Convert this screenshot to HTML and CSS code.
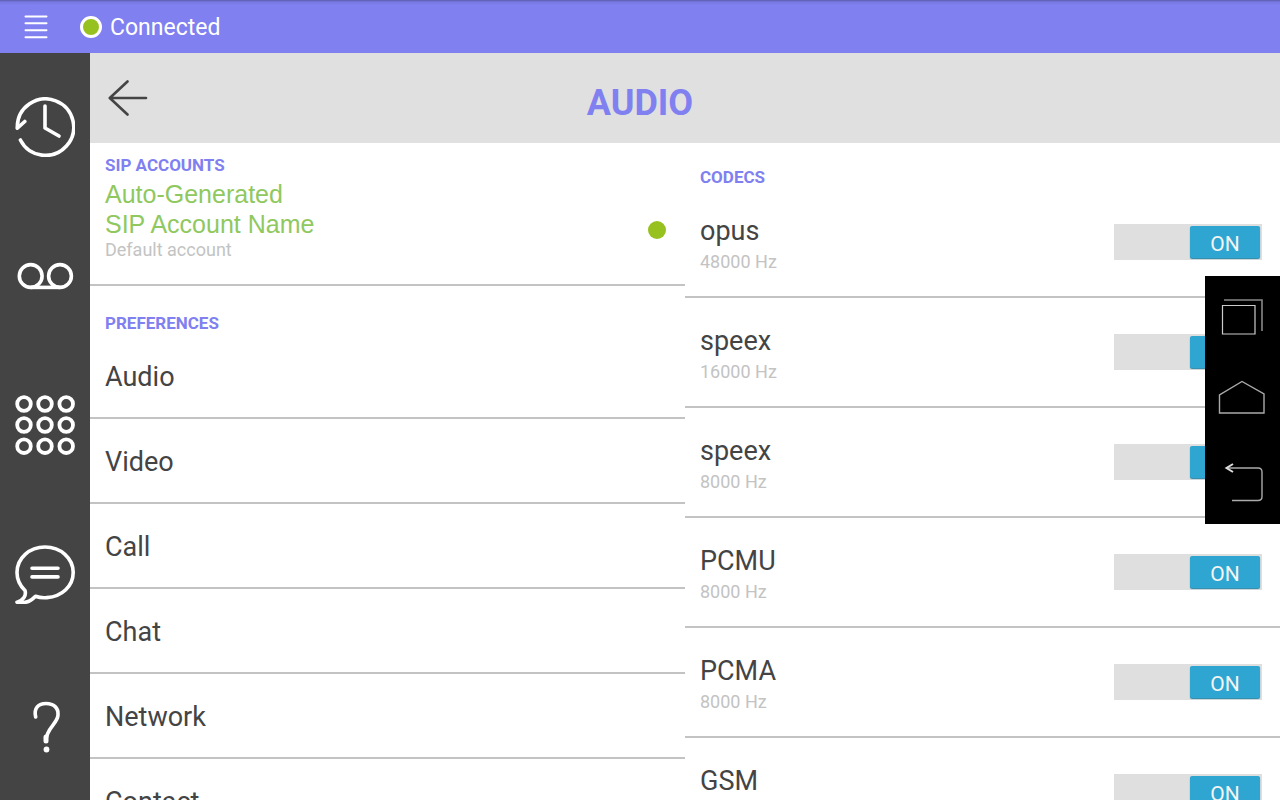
FILE: index.html
```html
<!DOCTYPE html>
<html lang="en">
<head>
<meta charset="utf-8">
<meta name="viewport" content="width=device-width, initial-scale=1">
<title>Audio settings</title>
<link rel="stylesheet" href="styles.css">
</head>
<body>
<div class="app">
  <header class="topbar">
    <button class="icon-button menu-button" type="button" aria-label="Menu">
      <svg width="24" height="24" viewBox="0 0 24 24" fill="none" stroke="#fff" stroke-width="2" stroke-linecap="round"><path d="M1.500 1.500h21M1.500 8.300h21M1.500 15.200h21M1.500 22.200h21"/></svg>
    </button>
    <span class="status-dot"></span>
    <span class="status-text">Connected</span>
  </header>
  <div class="body">
    <nav class="sidebar" aria-label="Main">
      <button class="icon-button side-item" type="button" aria-label="History">
        <svg width="60" height="60" viewBox="0 0 60 60" fill="none" stroke="#fff" stroke-width="3.600" stroke-linecap="round" stroke-linejoin="round"><path d="M2.300 30A28.200 28.200 0 1 1 5.400 43"/><path d="M9.800 24.500L2.300 31.200"/><path d="M30 9v22l14 8"/></svg>
      </button>
      <button class="icon-button side-item" type="button" aria-label="Voicemail">
        <svg width="60" height="30" viewBox="0 0 60 30" fill="none" stroke="#fff" stroke-width="3.600"><circle cx="15.700" cy="15" r="11.400"/><circle cx="45" cy="15" r="11.400"/><path d="M15.700 26.400H45"/></svg>
      </button>
      <button class="icon-button side-item" type="button" aria-label="Dial pad">
        <svg width="60" height="60" viewBox="0 0 60 60" fill="none" stroke="#fff" stroke-width="3.800"><circle cx="9" cy="9" r="6.800"/><circle cx="30" cy="9" r="6.800"/><circle cx="51.200" cy="9" r="6.800"/><circle cx="9" cy="30" r="6.800"/><circle cx="30" cy="30" r="6.800"/><circle cx="51.200" cy="30" r="6.800"/><circle cx="9" cy="51.200" r="6.800"/><circle cx="30" cy="51.200" r="6.800"/><circle cx="51.200" cy="51.200" r="6.800"/></svg>
      </button>
      <button class="icon-button side-item" type="button" aria-label="Chat">
        <svg width="60" height="60" viewBox="0 -1 60 60" fill="none" stroke="#fff" stroke-width="3.600" stroke-linecap="round" stroke-linejoin="round"><path d="M20.500 51.200C25 52.900 29 53 32 52.600C47 51.500 58.200 41 58.200 27.500C58.200 13 45.500 2 30 2S2 13 2 27.500C2 34.500 4.800 40.500 10 45.500C11.500 50.500 8.500 55.500 2 57.200C10 59 16 56 20.500 51.200Z"/><path d="M17 23.200h26M17 31.900h26"/></svg>
      </button>
      <button class="icon-button side-item" type="button" aria-label="Help">
        <svg width="60" height="60" viewBox="0 -8 60 60" fill="none" stroke="#fff" stroke-width="3.600" stroke-linecap="round"><path d="M20.700 16C18.500 7 23.500 2.500 31 2.500C39 2.500 43.500 7 43 14C42.500 23 31 27 31 40"/><path d="M31 36v4" stroke-width="5"/><circle cx="31.500" cy="48.500" r="2.900" fill="#fff" stroke="none"/></svg>
      </button>
    </nav>
    <main class="content">
      <div class="title-bar">
        <button class="icon-button back-button" type="button" aria-label="Back">
          <svg width="40" height="36" viewBox="0 0 40 36" fill="none" stroke="#444" stroke-width="2.600" stroke-linecap="round" stroke-linejoin="round"><path d="M38 18H2M19.500 1.500L1.800 18L19.500 34.500"/></svg>
        </button>
        <h1 class="title">AUDIO</h1>
      </div>
      <div class="panes">
        <section class="pane">
          <div class="account-section">
            <h2 class="heading">SIP ACCOUNTS</h2>
            <button class="account" type="button">
              <span class="account-text">
                <span class="account-name">Auto-Generated<br>SIP Account Name</span>
                <span class="caption">Default account</span>
              </span>
              <span class="account-dot"></span>
            </button>
          </div>
          <h2 class="heading preferences-heading">PREFERENCES</h2>
          <button class="preference" type="button">Audio</button>
          <button class="preference" type="button">Video</button>
          <button class="preference" type="button">Call</button>
          <button class="preference" type="button">Chat</button>
          <button class="preference" type="button">Network</button>
          <button class="preference" type="button">Contact</button>
        </section>
        <section class="pane">
          <h2 class="heading codecs-heading">CODECS</h2>
          <label class="codec"><span class="codec-text"><span class="codec-name">opus</span><span class="caption">48000 Hz</span></span><span class="switch"><input class="switch-input" type="checkbox" checked><span class="thumb">ON</span></span></label>
          <label class="codec"><span class="codec-text"><span class="codec-name">speex</span><span class="caption">16000 Hz</span></span><span class="switch"><input class="switch-input" type="checkbox" checked><span class="thumb">ON</span></span></label>
          <label class="codec"><span class="codec-text"><span class="codec-name">speex</span><span class="caption">8000 Hz</span></span><span class="switch"><input class="switch-input" type="checkbox" checked><span class="thumb">ON</span></span></label>
          <label class="codec"><span class="codec-text"><span class="codec-name">PCMU</span><span class="caption">8000 Hz</span></span><span class="switch"><input class="switch-input" type="checkbox" checked><span class="thumb">ON</span></span></label>
          <label class="codec"><span class="codec-text"><span class="codec-name">PCMA</span><span class="caption">8000 Hz</span></span><span class="switch"><input class="switch-input" type="checkbox" checked><span class="thumb">ON</span></span></label>
          <label class="codec"><span class="codec-text"><span class="codec-name">GSM</span><span class="caption">8000 Hz</span></span><span class="switch"><input class="switch-input" type="checkbox" checked><span class="thumb">ON</span></span></label>
        </section>
      </div>
    </main>
  </div>
  <nav class="system-nav" aria-label="System">
    <button class="icon-button system-item" type="button" aria-label="Recent apps">
      <svg width="48" height="40" viewBox="0 0 48 40" fill="none"><path d="M5.500 8.500h32.500v28.500h-32.500z" stroke="#ccc" stroke-width="1.200"/><path d="M7 3h38v31" stroke="#888" stroke-width="1.600"/></svg>
    </button>
    <button class="icon-button system-item" type="button" aria-label="Home">
      <svg width="48" height="40" viewBox="0 0 48 40" fill="none" stroke="#aaa" stroke-width="1.400"><path d="M2.500 33V15L25 1.500L47 14V33Z"/></svg>
    </button>
    <button class="icon-button system-item" type="button" aria-label="Back">
      <svg width="48" height="40" viewBox="0 0 48 40" fill="none" stroke="#aaa" stroke-width="1.400"><path d="M10 5H41Q45 5 45 9V33.500Q45 37.500 41 37.500H15"/><path d="M16 1L9.500 5L16 9" stroke="#ddd" stroke-width="2"/></svg>
    </button>
  </nav>
</div>
</body>
</html>
```
FILE: styles.css
```css
* {
  box-sizing: border-box;
}

body {
  margin: 0;
  font-family: Roboto, "Liberation Sans", sans-serif;
  color: #444;
  background: #fff;
}

button {
  font: inherit;
  color: inherit;
  background: none;
  border: 0;
  padding: 0;
  text-align: left;
  cursor: pointer;
}

h1,
h2 {
  margin: 0;
}

.app {
  display: flex;
  flex-direction: column;
  height: 100vh;
  overflow: hidden;
}

.icon-button {
  display: flex;
  align-items: center;
  justify-content: center;
}

.topbar {
  flex: none;
  display: flex;
  align-items: center;
  height: 53px;
  padding-left: 24px;
  color: #fff;
  background: linear-gradient(#5c5cac, #7878e2 2px, #8080f0 5px);
}

.menu-button {
  margin-right: 32px;
}

.status-dot {
  width: 22px;
  height: 22px;
  margin-right: 8px;
  border: 3px solid #fff;
  border-radius: 50%;
  background: #96c11f;
}

.status-text {
  padding-top: 2px;
  font-size: 23px;
  line-height: 28px;
}

.body {
  flex: 1;
  display: flex;
  min-height: 0;
}

.sidebar {
  flex: none;
  display: flex;
  flex-direction: column;
  width: 90px;
  padding-bottom: 3px;
  background: #444;
}

.side-item {
  flex: 1;
}

.content {
  flex: 1;
  display: flex;
  flex-direction: column;
  min-width: 0;
}

.title-bar {
  flex: none;
  display: grid;
  align-items: center;
  height: 90px;
  padding-right: 90px;
  background: #e0e0e0;
}

.back-button,
.title {
  grid-area: 1 / 1;
}

.back-button {
  justify-self: start;
  width: 75px;
  height: 90px;
}

.title {
  justify-self: center;
  padding-top: 10px;
  font-size: 36px;
  font-weight: 700;
  line-height: 44px;
  color: #8080f0;
}

.panes {
  flex: 1;
  display: grid;
  grid-template-columns: 1fr 1fr;
  min-height: 0;
}

.pane {
  min-width: 0;
  overflow-y: auto;
  scrollbar-width: none;
}

.heading {
  font-size: 17px;
  font-weight: 700;
  line-height: 22px;
  color: #8080f0;
}

.account-section {
  padding: 11px 15px 23px;
  border-bottom: 2px solid #c3c3c3;
}

.account {
  display: flex;
  align-items: center;
  justify-content: space-between;
  width: 100%;
  padding: 3px 4px 0 0;
}

.account-name {
  display: block;
  font-family: "Liberation Sans", Arial, sans-serif;
  font-size: 25px;
  line-height: 30px;
  color: #90c860;
}

.caption {
  display: block;
  font-size: 18px;
  line-height: 22px;
  color: #c3c3c3;
}

.account-dot {
  width: 18px;
  height: 18px;
  margin-top: 20px;
  border-radius: 50%;
  background: #96c11f;
}

.preferences-heading {
  padding: 26px 15px 0;
}

.codecs-heading {
  padding: 23px 15px 0;
}

.preference {
  display: block;
  width: 100%;
  height: 85px;
  padding: 2px 15px 0;
  border-bottom: 2px solid #c3c3c3;
  font-size: 27px;
}

.codec {
  display: flex;
  align-items: center;
  justify-content: space-between;
  height: 110px;
  padding: 0 18px 0 15px;
  border-bottom: 2px solid #c3c3c3;
}

.codec-text {
  padding-top: 4px;
}

.codec-name {
  display: block;
  padding-bottom: 4px;
  font-size: 27px;
  line-height: 32px;
}

.switch {
  display: grid;
  align-items: center;
  width: 148px;
  height: 36px;
  padding: 0 2px;
  background: #dfdfdf;
}

.switch-input,
.thumb {
  grid-area: 1 / 1;
}

.switch-input {
  appearance: none;
  width: 100%;
  height: 100%;
  margin: 0;
}

.thumb {
  justify-self: start;
  width: 70px;
  height: 32px;
  border-radius: 2px;
  font-size: 21px;
  line-height: 36px;
  text-align: center;
  color: #f4f4f4;
  background: #999;
  box-shadow: 0 1px 1px #2585a8;
}

.switch-input:checked + .thumb {
  justify-self: end;
  background: #2ea6d1;
}

.system-nav {
  position: fixed;
  top: 50%;
  right: 0;
  display: flex;
  flex-direction: column;
  width: 75px;
  height: 248px;
  padding-right: 4px;
  transform: translateY(-50%);
  background: #000;
}

.system-item {
  flex: 1;
}
```
